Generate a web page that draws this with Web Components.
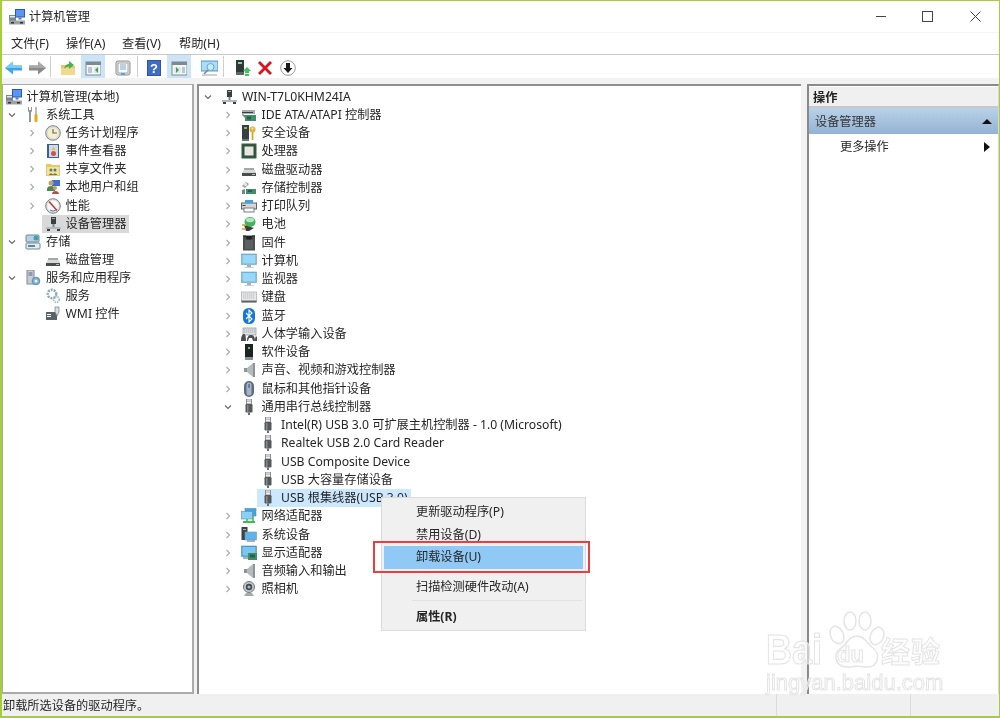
<!DOCTYPE html>
<html lang="zh">
<head>
<meta charset="utf-8">
<title>计算机管理</title>
<style>
  html, body { margin: 0; padding: 0; background: #fff; }
</style>
</head>
<body>
<win-app>
  <title-bar slot="title" icon="mgmt">计算机管理</title-bar>
  <menu-bar slot="menu">
    <span style="width:55px">文件(F)</span>
    <span style="width:56px">操作(A)</span>
    <span style="width:57px">查看(V)</span>
    <span>帮助(H)</span>
  </menu-bar>
  <tool-bar slot="tools">
    <tb-btn icon="back" style="margin-left:-1px"></tb-btn>
    <tb-btn icon="forward"></tb-btn>
    <tb-sep style="margin-left:1px"></tb-sep>
    <tb-btn icon="folderup" style="margin-left:5px"></tb-btn>
    <tb-btn icon="tree" on style="margin-left:1px"></tb-btn>
    <tb-btn icon="sheet" style="margin-left:6px"></tb-btn>
    <tb-sep style="margin-left:2px"></tb-sep>
    <tb-btn icon="help" style="margin-left:4px"></tb-btn>
    <tb-btn icon="pane" on style="margin-left:1px"></tb-btn>
    <tb-btn icon="scan" style="margin-left:6px"></tb-btn>
    <tb-sep style="margin-left:2px"></tb-sep>
    <tb-btn icon="devup" style="margin-left:7px"></tb-btn>
    <tb-btn icon="remove" style="margin-left:-2px"></tb-btn>
    <tb-btn icon="down" style="margin-left:-1px"></tb-btn>
  </tool-bar>

  <tree-panel slot="left" style="--base:-18.5px;--top:2.5px;--row:18.16px">
    <tree-row level="0" icon="mgmt">计算机管理(本地)</tree-row>
    <tree-row level="1" exp="open" icon="tools">系统工具</tree-row>
    <tree-row level="2" exp="closed" icon="clock">任务计划程序</tree-row>
    <tree-row level="2" exp="closed" icon="event">事件查看器</tree-row>
    <tree-row level="2" exp="closed" icon="share">共享文件夹</tree-row>
    <tree-row level="2" exp="closed" icon="users">本地用户和组</tree-row>
    <tree-row level="2" exp="closed" icon="perf">性能</tree-row>
    <tree-row level="2" icon="device" sel="grey">设备管理器</tree-row>
    <tree-row level="1" exp="open" icon="storage">存储</tree-row>
    <tree-row level="2" icon="disk">磁盘管理</tree-row>
    <tree-row level="1" exp="open" icon="services">服务和应用程序</tree-row>
    <tree-row level="2" icon="gear">服务</tree-row>
    <tree-row level="2" icon="wmi">WMI 控件</tree-row>
  </tree-panel>

  <tree-panel slot="center" style="--base:1px;--top:1.5px;--row:18.25px">
    <tree-row level="0" exp="open" icon="device">WIN-T7L0KHM24IA</tree-row>
    <tree-row level="1" exp="closed" icon="ide">IDE ATA/ATAPI 控制器</tree-row>
    <tree-row level="1" exp="closed" icon="security">安全设备</tree-row>
    <tree-row level="1" exp="closed" icon="cpu">处理器</tree-row>
    <tree-row level="1" exp="closed" icon="disk">磁盘驱动器</tree-row>
    <tree-row level="1" exp="closed" icon="stctl">存储控制器</tree-row>
    <tree-row level="1" exp="closed" icon="printer">打印队列</tree-row>
    <tree-row level="1" exp="closed" icon="battery">电池</tree-row>
    <tree-row level="1" exp="closed" icon="firmware">固件</tree-row>
    <tree-row level="1" exp="closed" icon="monitor">计算机</tree-row>
    <tree-row level="1" exp="closed" icon="monitor">监视器</tree-row>
    <tree-row level="1" exp="closed" icon="keyboard">键盘</tree-row>
    <tree-row level="1" exp="closed" icon="bluetooth">蓝牙</tree-row>
    <tree-row level="1" exp="closed" icon="hid">人体学输入设备</tree-row>
    <tree-row level="1" exp="closed" icon="soft">软件设备</tree-row>
    <tree-row level="1" exp="closed" icon="sound">声音、视频和游戏控制器</tree-row>
    <tree-row level="1" exp="closed" icon="mouse">鼠标和其他指针设备</tree-row>
    <tree-row level="1" exp="open" icon="usb">通用串行总线控制器</tree-row>
    <tree-row level="2" icon="usb">Intel(R) USB 3.0 可扩展主机控制器 - 1.0 (Microsoft)</tree-row>
    <tree-row level="2" icon="usb">Realtek USB 2.0 Card Reader</tree-row>
    <tree-row level="2" icon="usb">USB Composite Device</tree-row>
    <tree-row level="2" icon="usb">USB 大容量存储设备</tree-row>
    <tree-row level="2" icon="usb" sel="blue">USB 根集线器(USB 3.0)</tree-row>
    <tree-row level="1" exp="closed" icon="network">网络适配器</tree-row>
    <tree-row level="1" exp="closed" icon="system">系统设备</tree-row>
    <tree-row level="1" exp="closed" icon="display">显示适配器</tree-row>
    <tree-row level="1" exp="closed" icon="sound">音频输入和输出</tree-row>
    <tree-row level="1" exp="closed" icon="camera">照相机</tree-row>
  </tree-panel>

  <action-pane slot="right"></action-pane>

  <status-bar slot="status">卸载所选设备的驱动程序。</status-bar>

  <context-menu slot="overlay"></context-menu>
  <baidu-mark slot="overlay"></baidu-mark>
</win-app>

<script>
const FONT = `"Noto Sans", "Noto Sans CJK SC", sans-serif`

const ICONS = {
  mgmt: `<rect x="0" y="6" width="7" height="8" fill="#7d858d"/><rect x="1" y="7" width="5" height="1.500" fill="#e4e7ea"/><rect x="6" y="0" width="10" height="8.500" fill="#2558c0"/><rect x="7" y="1" width="8" height="6.500" fill="#5a96f0"/><rect x="9.500" y="8.500" width="3" height="2" fill="#6f7780"/><rect x="0" y="11.500" width="16" height="4" fill="#9aa3a8"/><rect x="2" y="13" width="3" height="1.500" fill="#333"/><rect x="11" y="13" width="3" height="1.500" fill="#333"/>`,
  back: `<path d="M0 8 8 1.500v4h9v5H8v4z" fill="#3ea6e8"/><path d="M8 1.500v4h9V8H0z" fill="#7fcaf5"/>`,
  forward: `<path d="M17 8 9 1.500v4H0v5h9v4z" fill="#8a8a8a"/><path d="M9 1.500v4H0V8h17z" fill="#a8a8a8"/>`,
  folderup: `<path d="M1 5h5l1 1h8v9H1z" fill="#e9c46e"/><path d="M1 8h14v7H1z" fill="#f3d88f"/><path d="M4 9C5 5 7 4 9 4V1l5 4-5 4V6.500C7 6.500 5 7.500 4 9z" fill="#49b04a"/>`,
  tree: `<rect x="1" y="2" width="15" height="13" fill="#f4f6f7" stroke="#7d8a90"/><rect x="1" y="2" width="15" height="3" fill="#7d8a90"/><rect x="3" y="7" width="4" height="6" fill="#b9c8d2"/><rect x="9" y="7" width="5" height="6" fill="#dfe8ea"/><path d="M13 7v6l-3-3z" fill="#3aa655"/>`,
  sheet: `<rect x="1" y="1" width="14" height="14" rx="2" fill="#e4e4e4" stroke="#8f8f8f"/><rect x="3" y="3" width="10" height="10" fill="#fafafa" stroke="#a8a8a8"/><path d="M5 5h6M5 7h6M5 9h6" stroke="#7fa7c8"/><rect x="6" y="13" width="4" height="2" fill="#47a9d8"/>`,
  help: `<rect x="1" y="0" width="14" height="16" fill="#2f55a8"/><rect x="2" y="1" width="12" height="14" fill="#3f6cc4"/><text x="8" y="13" font-size="13" font-weight="700" font-family="Liberation Sans" text-anchor="middle" fill="#fff">?</text>`,
  pane: `<rect x="1" y="2" width="15" height="13" fill="#f4f6f7" stroke="#7d8a90"/><rect x="1" y="2" width="15" height="3" fill="#7d8a90"/><rect x="3" y="7" width="7" height="6" fill="#dfe8ea"/><rect x="11" y="7" width="3" height="6" fill="#b9c8d2"/><path d="M5 7v6l3-3z" fill="#3aa655"/>`,
  scan: `<rect x="0" y="1" width="17" height="10" fill="#8fcdf0" stroke="#5d9fc4"/><rect x="1" y="2" width="15" height="8" fill="#a8dcf8"/><circle cx="9.500" cy="7" r="3.500" fill="#c6ecfc" stroke="#6aa8c8"/><path d="M7 10 3 14" stroke="#7b8a90" stroke-width="1.600"/><path d="M1 15h15" stroke="#9aa5aa"/>`,
  devup: `<rect x="1" y="0" width="8" height="12" fill="#2f3a36"/><rect x="3" y="2" width="4" height="2" fill="#7fd4a0"/><rect x="1" y="12" width="8" height="3" fill="#5d6664"/><path d="M12 7l4 4h-2v2h-4v-2H8z" fill="#2fcf55"/><rect x="10" y="14" width="4" height="2" fill="#2fcf55"/>`,
  remove: `<path d="M1 3 3 1l5 5 5-5 2 2-5 5 5 5-2 2-5-5-5 5-2-2 5-5z" fill="#d9141c"/>`,
  down: `<circle cx="8" cy="8" r="7.300" fill="#fff" stroke="#9a9a9a"/><path d="M6 3h4v5h2.500L8 13 3.500 8H6z" fill="#1a1a1a"/>`,
  tools: `<path d="M3 0v4l1 1.500V15h2V5.500L7 4V0L6 0v3H4V0z" fill="#8f979c"/><rect x="10" y="0" width="2" height="7" fill="#b9bec2"/><rect x="9.500" y="7" width="3" height="8" rx="1" fill="#e8a818"/>`,
  clock: `<circle cx="8" cy="8" r="7.300" fill="#d9dde0" stroke="#7f8488"/><circle cx="8" cy="8" r="5.300" fill="#f5efcf"/><path d="M8 4v4h4" fill="none" stroke="#7a6a40" stroke-width="1.200"/>`,
  event: `<rect x="2" y="1" width="12" height="14" fill="#3d5f96"/><rect x="4" y="2" width="9" height="12" fill="#cfdcec"/><path d="M8.500 3l2 4h-4z" fill="#f0c030"/><circle cx="8.500" cy="10.500" r="2.500" fill="#d05050"/>`,
  share: `<path d="M1 3h5l1 1h8v11H1z" fill="#e6c76a"/><rect x="2" y="6" width="12" height="8" fill="#f4e0a0"/><circle cx="6" cy="9" r="1.500" fill="#5a8a3a"/><circle cx="10" cy="9" r="1.500" fill="#3a7ab0"/><path d="M4 14c0-2 4-2 4 0zM8 14c0-2 4-2 4 0z" fill="#6a7a50"/>`,
  users: `<rect x="7" y="1" width="8" height="6" fill="#3d70c8"/><circle cx="6" cy="4" r="2.500" fill="#c8a06a"/><path d="M2 10c0-4 8-4 8 0v2H2z" fill="#4f8a4a"/><circle cx="10" cy="9" r="2" fill="#c89a70"/><path d="M7 15c0-4 7-4 7 0z" fill="#b0524a"/>`,
  perf: `<circle cx="8" cy="8" r="7.300" fill="#e4e4e4" stroke="#7b7b7b"/><circle cx="8" cy="8" r="5.300" fill="#fbfbfb"/><path d="M4 3.500l8 9" stroke="#cc3028" stroke-width="1.500"/><path d="M5 12a5 5 0 0 0 6 0" stroke="#3b7cc0" fill="none"/>`,
  device: `<rect x="6" y="1" width="5" height="7" fill="#3b3f42"/><rect x="7" y="2" width="3" height="1" fill="#8fb59a"/><rect x="7.500" y="8" width="2" height="3" fill="#7f8488"/><rect x="1" y="11" width="15" height="2" fill="#b5b9bc"/><rect x="2" y="13" width="3" height="2" fill="#3b3f42"/><rect x="12" y="13" width="3" height="2" fill="#3b3f42"/>`,
  storage: `<rect x="1" y="1" width="13" height="7" rx="1" fill="#b9d2de" stroke="#6e8a96"/><circle cx="11" cy="4" r="2.500" fill="#3fa0b8"/><rect x="1" y="9" width="14" height="6" rx="1" fill="#e8eced" stroke="#6e8a96"/><rect x="3" y="11" width="7" height="2" fill="#4f8ea8"/>`,
  disk: `<path d="M1 11l2-3h11l1 3z" fill="#d6d8d9"/><rect x="1" y="11" width="14" height="3" fill="#4a4d4f"/><rect x="11" y="12" width="3" height="1" fill="#8fd49a"/><rect x="3" y="6" width="10" height="2" fill="#a5a8aa"/>`,
  services: `<rect x="2" y="0" width="7" height="14" fill="#c5ced6" stroke="#7e8a94"/><path d="M3.500 3h4M3.500 5h4" stroke="#5f6b75"/><circle cx="11" cy="11" r="3.800" fill="#7fb0d0" stroke="#5d8eae"/><circle cx="11" cy="11" r="1.500" fill="#e8f2f8"/>`,
  gear: `<circle cx="7" cy="6" r="4.200" fill="none" stroke="#8fa9bc" stroke-width="2.500" stroke-dasharray="2 1"/><circle cx="11.500" cy="11.500" r="2.800" fill="none" stroke="#a5bccb" stroke-width="1.800" stroke-dasharray="1.500 .8"/>`,
  wmi: `<rect x="1" y="6" width="11" height="8" fill="#5a6268"/><rect x="2" y="8" width="4" height="1" fill="#fff"/><rect x="2" y="10" width="4" height="1" fill="#fff"/><path d="M10 1h4v5l-2 4-2-4z" fill="#d9dfe3" stroke="#6f7a82" stroke-width=".7"/>`,
  ide: `<rect x="1" y="3" width="13" height="4" fill="#a8acae"/><rect x="1" y="5" width="11" height="1" fill="#3a3d3f"/><path d="M4 8h11v6H4z" fill="#3f8f6a"/><rect x="6" y="9.500" width="4" height="3" fill="#2a5f48"/><path d="M1 7l3 1v3L1 8z" fill="#7f8487"/>`,
  security: `<rect x="1" y="0" width="7" height="14" fill="#3a3e40"/><rect x="3" y="2" width="3" height="2" fill="#67c46f"/><rect x="1" y="14" width="7" height="2" fill="#6f7477"/><circle cx="11.500" cy="4.500" r="3" fill="#e8b030"/><rect x="10.700" y="7" width="1.700" height="8" fill="#d8a020"/><circle cx="11.500" cy="3.500" r=".9" fill="#fff"/>`,
  cpu: `<rect x="0.500" y="0.500" width="15" height="15" fill="#2e5f3c"/><rect x="2" y="2" width="12" height="12" fill="#3a4a40"/><rect x="3.500" y="3.500" width="9" height="9" fill="#e4e8e0"/>`,
  stctl: `<path d="M1 6l4-4 3 2-4 4z" fill="#9aa3a8"/><circle cx="4.500" cy="4.500" r="1.500" fill="#e8ecef"/><path d="M5 9h10v5H5z" fill="#3f8f6a"/><rect x="7" y="10" width="4" height="2" fill="#2a5f48"/><path d="M1 10l3-1v5H1z" fill="#7f8487"/>`,
  printer: `<rect x="0.500" y="5" width="15" height="6" fill="#d3d6d8" stroke="#5f6468"/><rect x="4" y="2" width="8" height="3" fill="#3fa6d8"/><rect x="3" y="10" width="10" height="4" fill="#fafafa" stroke="#7a7f83"/><rect x="1.500" y="7" width="3" height="1" fill="#3a3d3f"/>`,
  battery: `<ellipse cx="9" cy="6" rx="5.500" ry="5" fill="#44b35c"/><ellipse cx="9" cy="4" rx="4" ry="2.200" fill="#b0e8c0"/><path d="M3 9l10 3-5 3H5z" fill="#3a3d3f"/><path d="M1 9h4M1 13h4" stroke="#c8a030" stroke-width="1.400"/>`,
  firmware: `<rect x="2" y="0.500" width="12" height="15" fill="#4a4d4f"/><path d="M2 1h3l1 3h4l1-3h3" fill="#222" stroke="#222"/><rect x="4" y="5" width="8" height="9" fill="#5c5f61"/>`,
  monitor: `<rect x="0.500" y="1" width="15" height="10.500" fill="#62b4ea" stroke="#7fa8c0" stroke-width=".7"/><rect x="1.500" y="2" width="13" height="8.500" fill="#9bd8f8"/><rect x="6" y="12" width="4" height="2" fill="#a5b2b8"/><rect x="3.500" y="14" width="9" height="1" fill="#c5ced2"/>`,
  keyboard: `<rect x="0.500" y="3" width="15" height="10" fill="#e8eaeb" stroke="#a5a8aa" stroke-width=".7"/><path d="M2 5h12M2 7h12M2 9h12" stroke="#b5b8ba" stroke-dasharray="1.400 .6"/><rect x="0.500" y="11.500" width="15" height="2" fill="#5f6468"/>`,
  bluetooth: `<rect x="2" y="0" width="12" height="16" rx="5.500" fill="#1378d8"/><path d="M5 5l6 6-3 3V2l3 3-6 6" fill="none" stroke="#fff" stroke-width="1.100"/>`,
  hid: `<rect x="2" y="2" width="13" height="7" fill="#dfe2e4" stroke="#8a8f93" stroke-width=".7"/><path d="M3 4h11M3 6h11" stroke="#a5a8aa" stroke-dasharray="1.400 .6"/><path d="M0 15c0-6 2-7 3-7s2 1 2 7zM6 15c0-5 2-6 4-6s4 1 4 6h-2l-1-3H8l-1 3z" fill="#4a4f53"/><path d="M14 15c0-4 1-5 1-5l1 1v4z" fill="#4a4f53"/>`,
  soft: `<rect x="4" y="0" width="8" height="13" fill="#1f2224"/><rect x="7" y="3" width="2" height="2" fill="#45d060"/><rect x="4" y="13" width="8" height="3" fill="#8a8f93"/>`,
  sound: `<path d="M3 6h3l6-5v14l-6-5H3z" fill="#b5babd"/><path d="M12 1v14h2V1z" fill="#8d9296"/><path d="M3 6h3v4H3z" fill="#8d9296"/>`,
  mouse: `<rect x="3" y="0" width="10" height="16" rx="5" fill="#5d6c80"/><rect x="5.500" y="1.500" width="5" height="13" rx="2.500" fill="#a5b4c8"/><rect x="7.500" y="3" width="1" height="4" fill="#3e4a5c"/>`,
  usb: `<rect x="5.500" y="0" width="5" height="5" fill="#f2f2f2" stroke="#777" stroke-width=".8"/><rect x="6.500" y="1.500" width="1" height="1.200" fill="#777"/><rect x="8.500" y="1.500" width="1" height="1.200" fill="#777"/><rect x="4.500" y="5" width="7" height="8.500" rx="1.200" fill="#55595c"/><rect x="6" y="6" width="1.500" height="7" fill="#85898c"/><rect x="7" y="13.500" width="2" height="2.500" fill="#6a6e71"/>`,
  network: `<rect x="4" y="0.500" width="11" height="7.500" fill="#3fa5e8" stroke="#5d8ca8" stroke-width=".6"/><rect x="0.500" y="3.500" width="11" height="7.500" fill="#8ad0f8" stroke="#5d8ca8" stroke-width=".6"/><rect x="2" y="13" width="12" height="2" fill="#38c048"/><path d="M6 11v2M12 8v5" stroke="#38c048" stroke-width="1.500"/>`,
  system: `<rect x="0.500" y="0" width="6" height="13" fill="#3e4244"/><rect x="2" y="2" width="3" height="1" fill="#b0b5b8"/><rect x="4" y="5" width="11.500" height="8" fill="#5cb4ec" stroke="#6a98b0" stroke-width=".6"/><rect x="6" y="13" width="8" height="2" fill="#a8b0b4"/>`,
  display: `<rect x="0.500" y="1" width="15" height="10.500" fill="#3d9ee0" stroke="#5d8ca8" stroke-width=".6"/><rect x="1.500" y="2" width="13" height="8.500" fill="#7cc6f4"/><rect x="7" y="8" width="9" height="7" fill="#3f8f6a"/><rect x="9" y="9.500" width="5" height="3" fill="#2a5f48"/><rect x="2" y="12" width="5" height="2" fill="#a8b0b4"/>`,
  camera: `<circle cx="8" cy="6" r="5.500" fill="#c3c6c8" stroke="#75797c"/><circle cx="8" cy="6" r="3.200" fill="#45494c"/><circle cx="8" cy="6" r="1.500" fill="#9cc0d4"/><path d="M5 12h6l2 3H3z" fill="#a8abad"/>`
}

class WinApp extends HTMLElement {
  constructor() {
    super()
    this.attachShadow({ mode: 'open' }).innerHTML = `
      <style>
        :host {
          display: flex;
          flex-direction: column;
          position: relative;
          box-sizing: border-box;
          width: 1000px;
          height: 718px;
          overflow: hidden;
          background: #f2f2f2;
          border-style: solid;
          border-color: #a6cd3c;
          border-width: 1px 1px 2px 2px;
          font: 12.2px/18px ${FONT};
          color: #262626;
          filter: blur(.3px);
        }
        #main {
          flex: 1;
          min-height: 0;
          display: flex;
          padding-top: 6px;
        }
        #left { display: flex; width: 192px; }
        #center { display: flex; width: 604px; margin-left: 3px; }
        #right { display: flex; width: 192px; margin-left: 6px; }
      </style>
      <slot name="title"></slot>
      <slot name="menu"></slot>
      <slot name="tools"></slot>
      <div id="main">
        <div id="left"><slot name="left"></slot></div>
        <div id="center"><slot name="center"></slot></div>
        <div id="right"><slot name="right"></slot></div>
      </div>
      <slot name="status"></slot>
      <slot name="overlay"></slot>
    `
  }
}

class TitleBar extends HTMLElement {
  constructor() {
    super()
    this.attachShadow({ mode: 'open' }).innerHTML = `
      <style>
        :host {
          display: flex;
          align-items: center;
          height: 31px;
          background: #fff;
          padding-left: 7px;
          box-sizing: border-box;
        }
        svg { display: block; }
        #label { margin-left: 4px; flex: 1; }
        #btns { display: flex; }
        .btn { width: 47px; height: 31px; display: flex; align-items: center; justify-content: center; }
      </style>
      <svg width="16" height="16" viewBox="0 0 16 16">${ICONS[this.getAttribute('icon')]}</svg>
      <span id="label"><slot></slot></span>
      <div id="btns">
        <div class="btn"><svg width="11" height="11" viewBox="0 0 11 11"><path d="M0 5.500h10" stroke="#444"/></svg></div>
        <div class="btn"><svg width="11" height="11" viewBox="0 0 11 11" style="margin-left:-2px"><rect x=".5" y=".5" width="10" height="10" fill="none" stroke="#444"/></svg></div>
        <div class="btn"><svg width="11" height="11" viewBox="0 0 11 11"><path d="M.5.500l10 10M10.500.500l-10 10" stroke="#444"/></svg></div>
      </div>
    `
  }
}

class MenuBar extends HTMLElement {
  constructor() {
    super()
    this.attachShadow({ mode: 'open' }).innerHTML = `
      <style>
        :host {
          display: flex;
          align-items: center;
          height: 23px;
          box-sizing: border-box;
          padding-left: 9px;
          background: #fff;
          border-top: 1px solid #f5f5f5;
          border-bottom: 1px solid #c9c9c9;
        }
        ::slotted(span) { display: block; }
      </style>
      <slot></slot>
    `
  }
}

class ToolBar extends HTMLElement {
  constructor() {
    super()
    this.attachShadow({ mode: 'open' }).innerHTML = `
      <style>
        :host {
          display: flex;
          align-items: center;
          height: 23px;
          background: #fff;
        }
      </style>
      <slot></slot>
    `
  }
}

class TbBtn extends HTMLElement {
  constructor() {
    super()
    const wide = ['back', 'forward', 'scan'].includes(this.getAttribute('icon'))
    this.attachShadow({ mode: 'open' }).innerHTML = `
      <style>
        :host {
          display: flex;
          align-items: center;
          justify-content: center;
          flex: none;
          width: 24px;
          height: 23px;
        }
        :host([on]) { background: #cce4f7; }
        svg { display: block; position: relative; top: 1px; }
      </style>
      <svg width="${wide ? 17 : 16}" height="16" viewBox="0 0 ${wide ? 17 : 16} 16">${ICONS[this.getAttribute('icon')]}</svg>
    `
  }
}

class TbSep extends HTMLElement {
  constructor() {
    super()
    this.attachShadow({ mode: 'open' }).innerHTML = `
      <style>
        :host { display: block; flex: none; width: 1px; height: 21px; background: #d0d0d0; }
      </style>
    `
  }
}

class TreePanel extends HTMLElement {
  constructor() {
    super()
    this.attachShadow({ mode: 'open' }).innerHTML = `
      <style>
        :host {
          display: block;
          flex: 1;
          min-width: 0;
          overflow: hidden;
          box-sizing: border-box;
          background: #fff;
          padding-top: var(--top);
        }
        :host([slot="left"]) { border: solid #ababab; border-width: 1px 2px 2px 1px; }
        :host([slot="center"]) { border: solid #8e8e8e; border-width: 2px 0 0 2px; }
      </style>
      <slot></slot>
    `
  }
}

class TreeRow extends HTMLElement {
  constructor() {
    super()
    const exp = this.getAttribute('exp')
    const chevron = exp === 'open'
      ? `<path d="M5 6.500l3 3 3-3" fill="none" stroke="#666" stroke-width="1.100"/>`
      : exp === 'closed'
        ? `<path d="M6.500 5l3 3-3 3" fill="none" stroke="#a8a8a8" stroke-width="1.100"/>`
        : ''
    this.attachShadow({ mode: 'open' }).innerHTML = `
      <style>
        :host {
          display: flex;
          align-items: center;
          height: var(--row);
          white-space: nowrap;
          margin-left: calc(var(--base) + ${this.getAttribute('level')} * 19.5px);
        }
        svg { display: block; flex: none; }
        #body {
          display: flex;
          align-items: center;
          height: 100%;
          margin-left: 2px;
          padding: 0 3px;
        }
        :host([sel="blue"]) #body { background: #cce8ff; }
        :host([sel="grey"]) #body { background: #d9d9d9; }
        #text { margin-left: 5px; }
      </style>
      <svg width="16" height="16" viewBox="0 0 16 16">${chevron}</svg>
      <div id="body">
        <svg width="16" height="16" viewBox="0 0 16 16">${ICONS[this.getAttribute('icon')]}</svg>
        <span id="text"><slot></slot></span>
      </div>
    `
  }
}

class ActionPane extends HTMLElement {
  constructor() {
    super()
    this.attachShadow({ mode: 'open' }).innerHTML = `
      <style>
        :host {
          display: flex;
          flex-direction: column;
          flex: 1;
          box-sizing: border-box;
          background: #fff;
          border: solid #8a8a8a;
          border-width: 2px 0 0 2px;
          border-right: 1px solid #d8d8d8;
        }
        #head {
          height: 19px;
          margin-top: 1px;
          padding-left: 4px;
          background: #f0f0f0;
          border-bottom: 2px solid #c8c8c8;
          font-weight: 700;
          line-height: 21px;
          color: #222;
        }
        #group {
          display: flex;
          align-items: center;
          justify-content: space-between;
          height: 26px;
          box-sizing: border-box;
          padding: 2px 6px 0 6px;
          background: linear-gradient(#b9d2e9, #94b2d2);
          color: #333;
        }
        #more {
          display: flex;
          align-items: center;
          justify-content: space-between;
          height: 24px;
          padding: 1px 8px 0 31px;
        }
        svg { display: block; }
      </style>
      <div id="head">操作</div>
      <div id="group">
        <span>设备管理器</span>
        <svg width="10" height="6" viewBox="0 0 10 6"><path d="M5 0l5 5H0z" fill="#111"/></svg>
      </div>
      <div id="more">
        <span>更多操作</span>
        <svg width="6" height="10" viewBox="0 0 6 10"><path d="M0 0l6 5-6 5z" fill="#111"/></svg>
      </div>
    `
  }
}

class StatusBar extends HTMLElement {
  constructor() {
    super()
    this.attachShadow({ mode: 'open' }).innerHTML = `
      <style>
        :host {
          display: grid;
          grid-template-columns: 774px 134px 1fr;
          height: 22px;
          box-sizing: border-box;
          background: #f0f0f0;
          line-height: 24px;
        }
        div { padding-left: 1px; }
        div + div { border-left: 1px solid #dcdcdc; }
      </style>
      <div><slot></slot></div>
      <div></div>
      <div></div>
    `
  }
}

class ContextMenu extends HTMLElement {
  constructor() {
    super()
    this.attachShadow({ mode: 'open' }).innerHTML = `
      <style>
        :host {
          display: block;
          position: absolute;
          left: 379px;
          top: 496px;
          width: 205px;
          height: 134px;
          box-sizing: border-box;
          padding: 3px 2px;
          background: #f0f0f0;
          border: 1px solid #dadada;
        }
        .item {
          height: 22.5px;
          line-height: 22px;
          padding-left: 32px;
        }
        .hot { background: #90c8f6; }
        .gap { height: 7.5px; }
        .sep { height: 1px; margin: 1px 0 5px 28px; background: #e2e2e2; }
        b { font-weight: 700; }
        #mark {
          position: absolute;
          left: -9px;
          top: 43px;
          width: 217px;
          height: 32px;
          box-sizing: border-box;
          border: 2px solid #e9403f;
        }
      </style>
      <div class="item">更新驱动程序(P)</div>
      <div class="item">禁用设备(D)</div>
      <div class="item hot">卸载设备(U)</div>
      <div class="gap"></div>
      <div class="item">扫描检测硬件改动(A)</div>
      <div class="sep"></div>
      <div class="item"><b>属性(R)</b></div>
      <div id="mark"></div>
    `
  }
}

class BaiduMark extends HTMLElement {
  constructor() {
    super()
    this.attachShadow({ mode: 'open' }).innerHTML = `
      <style>
        :host {
          display: block;
          position: absolute;
          left: 761px;
          top: 608px;
          width: 190px;
          height: 92px;
          pointer-events: none;
        }
        svg { position: absolute; left: 0; top: 0; }
        span {
          position: absolute;
          white-space: nowrap;
          color: rgba(255, 255, 255, .55);
          -webkit-text-stroke: 1px #e4e4e4;
        }
        #bai { left: 3px; top: 21px; font: 700 36px/40px "Liberation Sans", sans-serif; transform: scaleY(1.2); }
        #du { left: 74px; top: 34px; font: 700 22px/24px "Liberation Sans", sans-serif; }
        #jy { left: 118px; top: 26px; font: 700 29px/30px "Noto Sans CJK SC", sans-serif; letter-spacing: 1px; }
        #url { left: 3px; top: 61px; font: 22px/26px "Liberation Sans", sans-serif; }
      </style>
      <svg width="190" height="92" viewBox="0 0 190 92">
        <g fill="rgba(255,255,255,.55)" stroke="#e4e4e4" stroke-width="1.500">
          <ellipse cx="74" cy="26" rx="6.500" ry="9" transform="rotate(-25 74 26)"/>
          <ellipse cx="87" cy="12" rx="6" ry="9"/>
          <ellipse cx="102" cy="12" rx="6" ry="9"/>
          <ellipse cx="114" cy="27" rx="6.500" ry="9" transform="rotate(25 114 27)"/>
          <path d="M94 27c8 0 10 8 16 12 8 6 5 20-7 19-4 0-6-1-9-1s-6 2-11 1c-11-1-13-13-6-18 7-4 8-13 17-13z"/>
        </g>
      </svg>
      <span id="bai">Bai</span>
      <span id="du">du</span>
      <span id="jy">经验</span>
      <span id="url">jingyan.baidu.com</span>
    `
  }
}

customElements.define('win-app', WinApp)
customElements.define('title-bar', TitleBar)
customElements.define('menu-bar', MenuBar)
customElements.define('tool-bar', ToolBar)
customElements.define('tb-btn', TbBtn)
customElements.define('tb-sep', TbSep)
customElements.define('tree-panel', TreePanel)
customElements.define('tree-row', TreeRow)
customElements.define('action-pane', ActionPane)
customElements.define('status-bar', StatusBar)
customElements.define('context-menu', ContextMenu)
customElements.define('baidu-mark', BaiduMark)
</script>
</body>
</html>
